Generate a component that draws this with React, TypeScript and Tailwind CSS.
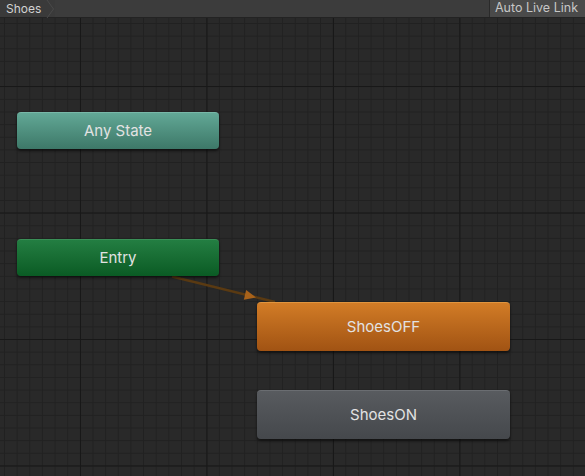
import React from "react";

function StateNode({
  label,
  cls,
  pos,
}: {
  label: string;
  cls: string;
  pos: string;
}) {
  return (
    <div
      className={`absolute flex items-center justify-center rounded-[4px] text-[15px] text-[#e2e2e2] shadow-[0_2px_3px_rgba(0,0,0,0.55)] ${cls} ${pos}`}
    >
      {label}
    </div>
  );
}

export default function App() {
  return (
    <div className="w-[585px] h-[476px] flex flex-col overflow-hidden bg-[#282828] font-['Inter','Noto_Sans',sans-serif]">
      {/* top bar */}
      <div className="h-[18px] shrink-0 flex items-stretch justify-between bg-[#3c3c3c] border-b border-[#232323]">
        <div className="relative flex items-center pl-[6px] pr-[14px] text-[12px] text-[#d2d2d2] bg-[#3a3a3a]">
          Shoes
          <svg
            className="absolute right-0 top-0"
            width="9"
            height="18"
            viewBox="0 0 9 18"
          >
            <path d="M1 0 L7.5 9 L1 18" fill="none" stroke="#4a4a4a" strokeWidth="1" />
          </svg>
        </div>
        <div className="w-[96px] flex items-center pl-[5px] text-[12.5px] text-[#c6c6c6] bg-[#4a4a4a] border-l border-[#2a2a2a]">
          Auto Live Link
        </div>
      </div>

      {/* graph canvas */}
      <div className="relative flex-1 bg-[#292929] bg-[linear-gradient(to_right,#181818_1px,transparent_1px),linear-gradient(to_bottom,#181818_1px,transparent_1px),linear-gradient(to_right,#212121_1px,transparent_1px),linear-gradient(to_bottom,#212121_1px,transparent_1px)] bg-[size:126.5px_126.5px,126.5px_126.5px,12.65px_12.65px,12.65px_12.65px] bg-[position:80px_68px,80px_68px,4px_5px,4px_5px]">
        <svg
          className="absolute left-0 top-0 pointer-events-none"
          width="585"
          height="458"
          viewBox="0 18 585 458"
        >
          <line
            x1="172"
            y1="276.5"
            x2="275"
            y2="302"
            stroke="#5a3a12"
            strokeWidth="2.5"
          />
          <polygon
            points="256,297.5 246.2,290 243.8,299.7"
            fill="#a8621a"
          />
        </svg>

        <StateNode
          label="Any State"
          pos="left-[17px] top-[94px] w-[202px] h-[37px]"
          cls="bg-linear-to-b from-[#62a896] to-[#3d7868] border-t border-[#78b8a8]"
        />
        <StateNode
          label="Entry"
          pos="left-[17px] top-[221px] w-[202px] h-[37px]"
          cls="bg-linear-to-b from-[#237e42] to-[#0a5b24] border-t border-[#3a8f57]"
        />
        <StateNode
          label="ShoesOFF"
          pos="left-[257px] top-[284px] w-[253px] h-[49px]"
          cls="bg-linear-to-b from-[#d27c26] to-[#a15313] border-t border-[#e0953f]"
        />
        <StateNode
          label="ShoesON"
          pos="left-[257px] top-[372px] w-[253px] h-[49px]"
          cls="bg-linear-to-b from-[#585b5f] to-[#45484c] border-t border-[#6a6d71]"
        />
      </div>
    </div>
  );
}
